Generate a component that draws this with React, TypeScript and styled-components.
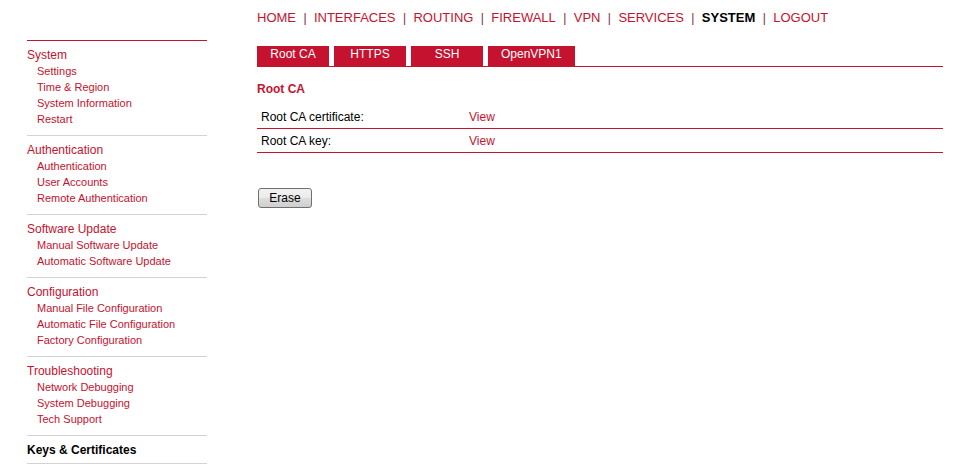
import React from 'react';
import styled, { createGlobalStyle } from 'styled-components';

const RED = '#c4122f';

const GlobalStyle = createGlobalStyle`
  html, body {
    margin: 0;
    padding: 0;
    background: #fff;
    font-family: "Liberation Sans", Arial, sans-serif;
  }
`;

const menu = [
  {
    title: 'System',
    items: ['Settings', 'Time & Region', 'System Information', 'Restart'],
  },
  {
    title: 'Authentication',
    items: ['Authentication', 'User Accounts', 'Remote Authentication'],
  },
  {
    title: 'Software Update',
    items: ['Manual Software Update', 'Automatic Software Update'],
  },
  {
    title: 'Configuration',
    items: [
      'Manual File Configuration',
      'Automatic File Configuration',
      'Factory Configuration',
    ],
  },
  {
    title: 'Troubleshooting',
    items: ['Network Debugging', 'System Debugging', 'Tech Support'],
  },
  { title: 'Keys & Certificates', items: [], active: true },
];

const navLinks = [
  'HOME',
  'INTERFACES',
  'ROUTING',
  'FIREWALL',
  'VPN',
  'SERVICES',
  'SYSTEM',
  'LOGOUT',
];

const tabs = ['Root CA', 'HTTPS', 'SSH', 'OpenVPN1'];

const rows = [
  { label: 'Root CA certificate:', action: 'View' },
  { label: 'Root CA key:', action: 'View' },
];

const App = () => (
  <>
    <GlobalStyle />
    <Page>
      <Sidebar>
        {menu.map((section, i) => (
          <Section key={section.title} first={i === 0}>
            <SectionTitle active={section.active}>{section.title}</SectionTitle>
            {section.items.length > 0 && (
              <ItemList>
                {section.items.map((item) => (
                  <li key={item}>{item}</li>
                ))}
              </ItemList>
            )}
          </Section>
        ))}
      </Sidebar>

      <Main>
        <Nav>
          {navLinks.map((link, i) => (
            <React.Fragment key={link}>
              {i > 0 && <Sep>|</Sep>}
              <NavLink active={link === 'SYSTEM'}>{link}</NavLink>
            </React.Fragment>
          ))}
        </Nav>

        <Tabs>
          {tabs.map((tab) => (
            <Tab key={tab}>{tab}</Tab>
          ))}
        </Tabs>

        <Heading>Root CA</Heading>

        <Table>
          {rows.map((row) => (
            <Row key={row.label}>
              <Label>{row.label}</Label>
              <Action>{row.action}</Action>
            </Row>
          ))}
        </Table>

        <Button>Erase</Button>
      </Main>
    </Page>
  </>
);

const Page = styled.div`
  display: grid;
  grid-template-columns: 180px 686px;
  column-gap: 50px;
  padding: 0 27px;
  width: 970px;
  height: 467px;
  box-sizing: border-box;
  overflow: hidden;
`;

const Sidebar = styled.aside`
  padding-top: 40px;
`;

const Section = styled.div<{ first?: boolean }>`
  border-top: 1px solid ${(p) => (p.first ? RED : '#d3d3d3')};
  padding: 6px 0 6px;
  &:last-child {
    padding-bottom: 5px;
    border-bottom: 1px solid #d3d3d3;
  }
`;

const SectionTitle = styled.div<{ active?: boolean }>`
  font-size: 12px;
  line-height: 16px;
  color: ${(p) => (p.active ? '#000' : RED)};
  font-weight: ${(p) => (p.active ? 'bold' : 'normal')};
`;

const ItemList = styled.ul`
  list-style: none;
  margin: 0 0 2px;
  padding: 0 0 0 10px;
  li {
    font-size: 11px;
    line-height: 16px;
    color: ${RED};
  }
`;

const Main = styled.main`
  display: flex;
  flex-direction: column;
  align-items: flex-start;
`;

const Nav = styled.nav`
  display: flex;
  align-items: baseline;
  padding-top: 10px;
  font-size: 13px;
  line-height: 16px;
`;

const NavLink = styled.span<{ active?: boolean }>`
  color: ${(p) => (p.active ? '#000' : RED)};
  font-weight: ${(p) => (p.active ? 'bold' : 'normal')};
`;

const Sep = styled.span`
  margin: 0 7.4px;
  color: #7b1f45;
  font-size: 12px;
`;

const Tabs = styled.div`
  display: flex;
  gap: 5px;
  margin-top: 20px;
  align-self: stretch;
  border-bottom: 1px solid ${RED};
`;

const Tab = styled.div`
  min-width: 72px;
  box-sizing: border-box;
  padding: 1px 13px 5px;
  font-size: 12px;
  line-height: 14px;
  color: #fff;
  background: ${RED};
  text-align: center;
`;

const Heading = styled.h2`
  margin: 14px 0 8px;
  font-size: 12px;
  line-height: 16px;
  font-weight: bold;
  color: ${RED};
`;

const Table = styled.div`
  align-self: stretch;
`;

const Row = styled.div`
  display: grid;
  grid-template-columns: 208px 1fr;
  height: 23px;
  align-items: center;
  padding-left: 4px;
  border-bottom: 1px solid ${RED};
  font-size: 12px;
`;

const Label = styled.span`
  color: #000;
`;

const Action = styled.span`
  color: ${RED};
`;

const Button = styled.button`
  margin-top: 35px;
  margin-left: 1px;
  width: 54px;
  height: 20px;
  padding: 0;
  border: 1px solid #707070;
  border-radius: 3px;
  background: linear-gradient(#f2f2f2, #ebebeb 50%, #dddddd 51%, #cfcfcf);
  font-family: "Liberation Sans", Arial, sans-serif;
  font-size: 12px;
  color: #000;
`;

export default App;
